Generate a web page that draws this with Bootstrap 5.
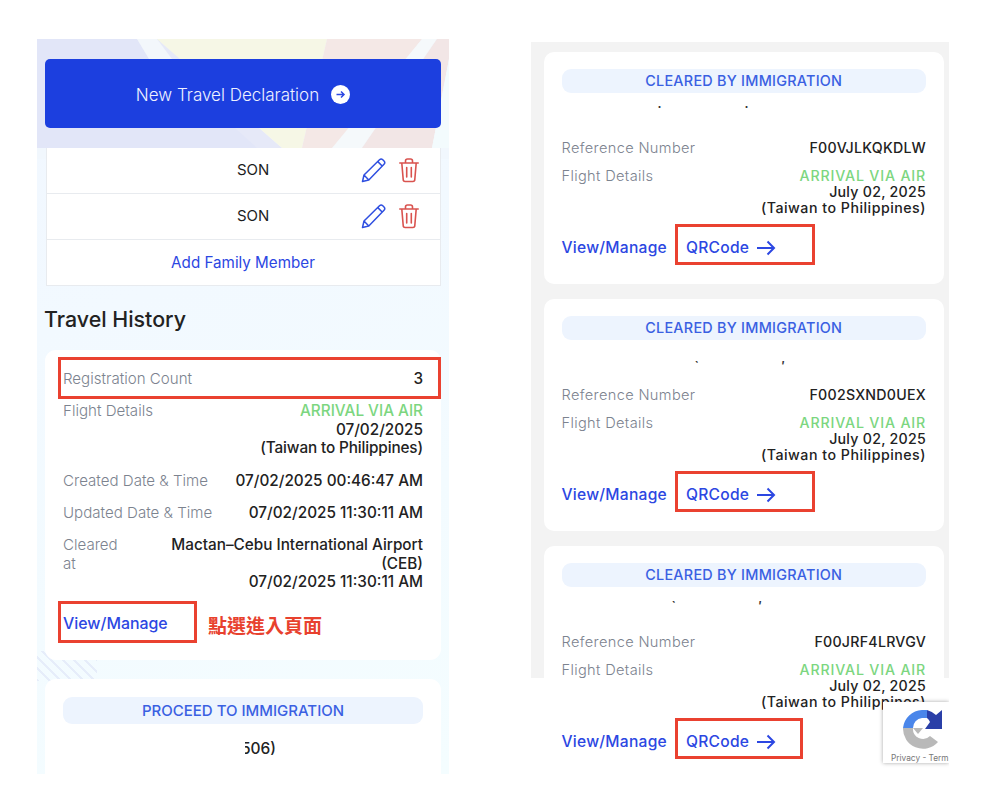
<!DOCTYPE html>
<html lang="en">
<head>
<meta charset="utf-8">
<title>Travel History</title>
<link href="https://cdn.jsdelivr.net/npm/bootstrap@5.3.0/dist/css/bootstrap.min.css" rel="stylesheet">
<style>
html,body{height:808px;overflow:hidden;background:#fff;}
body{font-family:Inter,"Noto Sans",sans-serif;color:#222;}
.sheet{padding:39px 0 0 37px;gap:82px;}
.phone-left{width:412px;height:735px;overflow:hidden;position:relative;padding:20px 8px 0;background:repeating-linear-gradient(45deg,#e6edfa 0 2px,transparent 2px 8px) 0 612px/60px 30px no-repeat,linear-gradient(160deg,#f1f7ff,#f4fdff);}
.flag-art{position:absolute;left:0;top:0;width:412px;height:120px;}
.phone-left>*:not(.flag-art){position:relative;}
.declare-btn{height:69px;width:396px;background:#1c3fdf;border:0;border-radius:5px;color:#eef1ff;font-size:17px;font-weight:300;gap:12px;margin-bottom:20px;padding-top:11px;}
.declare-btn:hover{background:#1c3fdf;color:#eef1ff;}
.go-dot{margin-top:-3px;}
.member-list{margin-left:1px;width:395px;border-radius:0;}
.member-list .list-group-item{height:46px;padding:0 21px 0 0;border-color:#e8ebef;font-size:15px;font-weight:400;color:#1d1d1d;}
.member-list .list-group-item:first-child{border-top:0;}
.member-name{margin-left:190px;}
.icon-pair{gap:13px;}
.member-link{color:#2c47e2;font-weight:400;text-decoration:none;font-size:15.2px;padding:1px 0 0 20px;}
.hist-title{font-size:21.4px;font-weight:500;color:#222;margin:19px 0 17px -1px;line-height:28px;}
.trip-card{width:396px;border:0;border-radius:11px;background:#fff;}
.trip-body{padding:18px 18px 0;font-size:15.3px;line-height:18.4px;height:310px;}
.trip-row{display:flex;justify-content:space-between;margin-bottom:14px;position:relative;}
.trip-row.reg{margin-top:2px;}
.trip-row.act-row{margin-top:23px;}
.lab{color:#7c838f;font-weight:300;}
.trip-row .lab{font-size:15.1px;}
.val{text-align:right;font-weight:500;color:#222;}
.arr{color:#7cd67f;font-weight:500;}
.trip-row .tw{letter-spacing:-.12px;}
.act{color:#2c47e2;font-weight:500;text-decoration:none;font-size:15.9px;}
.mark-box{position:absolute;border:3px solid #ea4130;pointer-events:none;}
.zh-note{position:absolute;left:163px;top:262px;color:#e8412e;font:700 19px "Noto Sans CJK TC",sans-serif;line-height:26px;}
.trip-next{margin-top:19px;height:120px;}
.pill{background:#edf4fe;color:#3a60e2;border-radius:9px;text-align:center;font-weight:500;}
.pill-a{height:27px;line-height:28px;font-size:15px;}
.clip-no{display:block;margin:16px 0 0 178px;font-weight:500;font-size:15.5px;clip-path:inset(0 0 0 4px);}
.phone-right{width:417.5px;margin-top:3px;padding:10px 4px 0 13px;position:relative;background:linear-gradient(#f3f3f3 636px,#fff 636px);height:732px;overflow:hidden;}
.res-card{border:0;border-radius:10px;background:#fff;width:400px;height:231.5px;margin-bottom:15.5px;padding:17px 18px 0 17.5px;font-size:14.2px;line-height:16px;letter-spacing:.25px;}
.res-card .lab{font-size:14.6px;letter-spacing:.35px;}
.res-card .arr{letter-spacing:.82px;}
.res-card .tw{letter-spacing:.5px;}
.pill-b{height:23.5px;line-height:23.5px;font-size:14.4px;}
.ticks{height:47px;position:relative;font-size:12px;line-height:8px;font-weight:700;color:#333;}
.ticks span{position:absolute;}
.ticks-a{padding-top:7px;}
.ticks-b{padding-top:22px;}
.ticks-c{padding-top:15px;}
.res-row{display:flex;justify-content:space-between;margin-bottom:12px;}
.res-actions{display:flex;align-items:center;gap:19px;margin-top:12.5px;position:relative;font-weight:500;font-size:15.6px;}
.res-actions a{color:#2c47e2;text-decoration:none;display:flex;align-items:center;gap:7px;}
.captcha{position:absolute;left:352px;top:660px;width:66px;height:61px;background:#fff;box-shadow:0 0 4px rgba(0,0,0,.35);overflow:hidden;white-space:nowrap;font-size:8.3px;color:#777;line-height:12px;}
.captcha svg{display:block;margin:5px 0 1px 18px;}
.captcha div{padding-left:8px;}
</style>
</head>
<body class="m-0">
<div class="d-flex align-items-start sheet">

<section class="phone-left">
  <svg class="flag-art" viewBox="0 0 412 120" preserveAspectRatio="none" aria-hidden="true">
    <rect width="412" height="120" fill="#f1f7fd"/>
    <polygon points="0,0 100,0 245,109 0,109" fill="#e2e6f8"/>
    <polygon points="100,0 122,0 245,109 220,109" fill="#e6e9f8"/>
    <polygon points="100,0 120,0 135,20 112,20" fill="#f3f7fb"/>
    <polygon points="120,0 290,0 265,109 245,109" fill="#f6f7e6"/>
    <polygon points="290,0 385,0 300,109 265,109" fill="#f4e8e6"/>
    <polygon points="385,0 400,0 325,109 295,109" fill="#f5f9fb"/>
    <polygon points="400,0 412,0 412,20 395,109 325,109" fill="#f2e6e6"/>
    <polygon points="412,20 412,109 395,109" fill="#f3fbfd"/>
  </svg>

  <button class="btn d-flex align-items-center justify-content-center declare-btn" type="button">
    New Travel Declaration
    <svg class="go-dot" width="19" height="19" viewBox="0 0 19 19" aria-hidden="true"><circle cx="9.500" cy="9.500" r="9.500" fill="#fff"/><path d="M5.500 9.500h7.500M10 6.500l3 3-3 3" fill="none" stroke="#2c47e2" stroke-width="1.500"/></svg>
  </button>

  <ul class="list-group member-list">
    <li class="list-group-item d-flex align-items-center">
      <span class="member-name">SON</span>
      <span class="ms-auto d-flex align-items-center icon-pair">
        <svg width="25" height="25" viewBox="0 0 25 25" aria-hidden="true"><path d="M1.500 23.500l1.500-6.500L18.500 1.800a2.400 2.400 0 0 1 3.300 0l1.200 1.200a2.400 2.400 0 0 1 0 3.300L7.800 22zM3 17l4.800 5M16.800 3.600l4.600 4.600" fill="none" stroke="#2f4fe0" stroke-width="1.500" stroke-linejoin="round"/></svg>
        <svg width="20" height="25" viewBox="0 0 20 25" aria-hidden="true"><path d="M.8 5h18.400M6.500 5V3a2 2 0 0 1 2-2h3a2 2 0 0 1 2 2v2M2.800 5l1.400 16.500a2 2 0 0 0 2 2h7.600a2 2 0 0 0 2-2L17.200 5M7.700 9.500v9.500M12.300 9.500v9.500" fill="none" stroke="#d9534f" stroke-width="1.600" stroke-linecap="round"/></svg>
      </span>
    </li>
    <li class="list-group-item d-flex align-items-center">
      <span class="member-name">SON</span>
      <span class="ms-auto d-flex align-items-center icon-pair">
        <svg width="25" height="25" viewBox="0 0 25 25" aria-hidden="true"><path d="M1.500 23.500l1.500-6.500L18.500 1.800a2.400 2.400 0 0 1 3.300 0l1.200 1.200a2.400 2.400 0 0 1 0 3.300L7.800 22zM3 17l4.800 5M16.800 3.600l4.600 4.600" fill="none" stroke="#2f4fe0" stroke-width="1.500" stroke-linejoin="round"/></svg>
        <svg width="20" height="25" viewBox="0 0 20 25" aria-hidden="true"><path d="M.8 5h18.400M6.500 5V3a2 2 0 0 1 2-2h3a2 2 0 0 1 2 2v2M2.800 5l1.400 16.500a2 2 0 0 0 2 2h7.600a2 2 0 0 0 2-2L17.200 5M7.700 9.500v9.500M12.300 9.500v9.500" fill="none" stroke="#d9534f" stroke-width="1.600" stroke-linecap="round"/></svg>
      </span>
    </li>
    <li class="list-group-item d-flex align-items-center justify-content-center">
      <a class="member-link" href="#">Add Family Member</a>
    </li>
  </ul>

  <h2 class="hist-title">Travel History</h2>

  <div class="card trip-card">
    <div class="trip-body">
      <div class="trip-row reg">
        <span class="lab">Registration Count</span><span class="val">3</span>
        <span class="mark-box" style="left:-5px;right:-18px;top:-13px;bottom:-11px"></span>
      </div>
      <div class="trip-row">
        <span class="lab">Flight Details</span>
        <span class="val"><span class="arr">ARRIVAL VIA AIR</span><br>07/02/2025<br><span class="tw">(Taiwan to Philippines)</span></span>
      </div>
      <div class="trip-row"><span class="lab">Created Date &amp; Time</span><span class="val">07/02/2025 00:46:47 AM</span></div>
      <div class="trip-row"><span class="lab">Updated Date &amp; Time</span><span class="val">07/02/2025 11:30:11 AM</span></div>
      <div class="trip-row">
        <span class="lab">Cleared<br>at</span>
        <span class="val">Mactan–Cebu International Airport<br>(CEB)<br>07/02/2025 11:30:11 AM</span>
      </div>
      <div class="trip-row act-row">
        <a class="act" href="#">View/Manage</a>
        <span class="mark-box" style="left:-5px;width:139px;top:-14px;bottom:-10px"></span>
      </div>
      <span class="zh-note">點選進入頁面</span>
    </div>
  </div>

  <div class="card trip-card trip-next">
    <div class="trip-body">
      <div class="pill pill-a">PROCEED TO IMMIGRATION</div>
      <span class="clip-no">506)</span>
    </div>
  </div>
</section>

<section class="phone-right">
  <div class="card res-card">
    <div class="pill pill-b">CLEARED BY IMMIGRATION</div>
    <div class="ticks ticks-a"><span style="left:96px">.</span><span style="left:183px">.</span></div>
    <div class="res-row"><span class="lab">Reference Number</span><span class="val">F00VJLKQKDLW</span></div>
    <div class="res-row"><span class="lab">Flight Details</span><span class="val"><span class="arr">ARRIVAL VIA AIR</span><br>July 02, 2025<br><span class="tw">(Taiwan to Philippines)</span></span></div>
    <div class="res-actions"><a href="#">View/Manage</a><a href="#">QRCode <svg width="20" height="16" viewBox="0 0 20 16" aria-hidden="true"><path d="M1 8h17M11.500 1.500L18 8l-6.500 6.500" fill="none" stroke="#2c47e2" stroke-width="2"/></svg></a>
      <span class="mark-box" style="left:113px;width:140px;top:-16px;height:41px"></span></div>
  </div>
  <div class="card res-card">
    <div class="pill pill-b">CLEARED BY IMMIGRATION</div>
    <div class="ticks ticks-b"><span style="left:133px">`</span><span style="left:220px">′</span></div>
    <div class="res-row"><span class="lab">Reference Number</span><span class="val">F002SXND0UEX</span></div>
    <div class="res-row"><span class="lab">Flight Details</span><span class="val"><span class="arr">ARRIVAL VIA AIR</span><br>July 02, 2025<br><span class="tw">(Taiwan to Philippines)</span></span></div>
    <div class="res-actions"><a href="#">View/Manage</a><a href="#">QRCode <svg width="20" height="16" viewBox="0 0 20 16" aria-hidden="true"><path d="M1 8h17M11.500 1.500L18 8l-6.500 6.500" fill="none" stroke="#2c47e2" stroke-width="2"/></svg></a>
      <span class="mark-box" style="left:113px;width:140px;top:-16px;height:41px"></span></div>
  </div>
  <div class="card res-card">
    <div class="pill pill-b">CLEARED BY IMMIGRATION</div>
    <div class="ticks ticks-c"><span style="left:110px">`</span><span style="left:197px">′</span></div>
    <div class="res-row"><span class="lab">Reference Number</span><span class="val">F00JRF4LRVGV</span></div>
    <div class="res-row"><span class="lab">Flight Details</span><span class="val"><span class="arr">ARRIVAL VIA AIR</span><br>July 02, 2025<br><span class="tw">(Taiwan to Philippines)</span></span></div>
    <div class="res-actions"><a href="#">View/Manage</a><a href="#">QRCode <svg width="20" height="16" viewBox="0 0 20 16" aria-hidden="true"><path d="M1 8h17M11.500 1.500L18 8l-6.500 6.500" fill="none" stroke="#2c47e2" stroke-width="2"/></svg></a>
      <span class="mark-box" style="left:113px;width:128px;top:-16px;height:41px"></span></div>
  </div>
  <div class="captcha">
    <svg width="44" height="44" viewBox="0 0 44 44" aria-hidden="true">
      <path d="M2 21H12A10 10 0 0 0 29 29L37 35A20 20 0 0 1 2 21Z" fill="#b9b9b9"/>
      <path d="M12 21l10 0-5 6z" fill="#b9b9b9"/>
      <path d="M2 21A20 20 0 0 1 21 3H26V11H21A10 10 0 0 0 12 21Z" fill="#4a86ea"/>
      <path d="M26 3A20 20 0 0 1 35 8L41 3V22H24L29 15A10 10 0 0 0 26 11Z" fill="#2a3fa8"/>
    </svg>
    <div>Privacy - Term</div>
  </div>
</section>
</div>
</body>
</html>
